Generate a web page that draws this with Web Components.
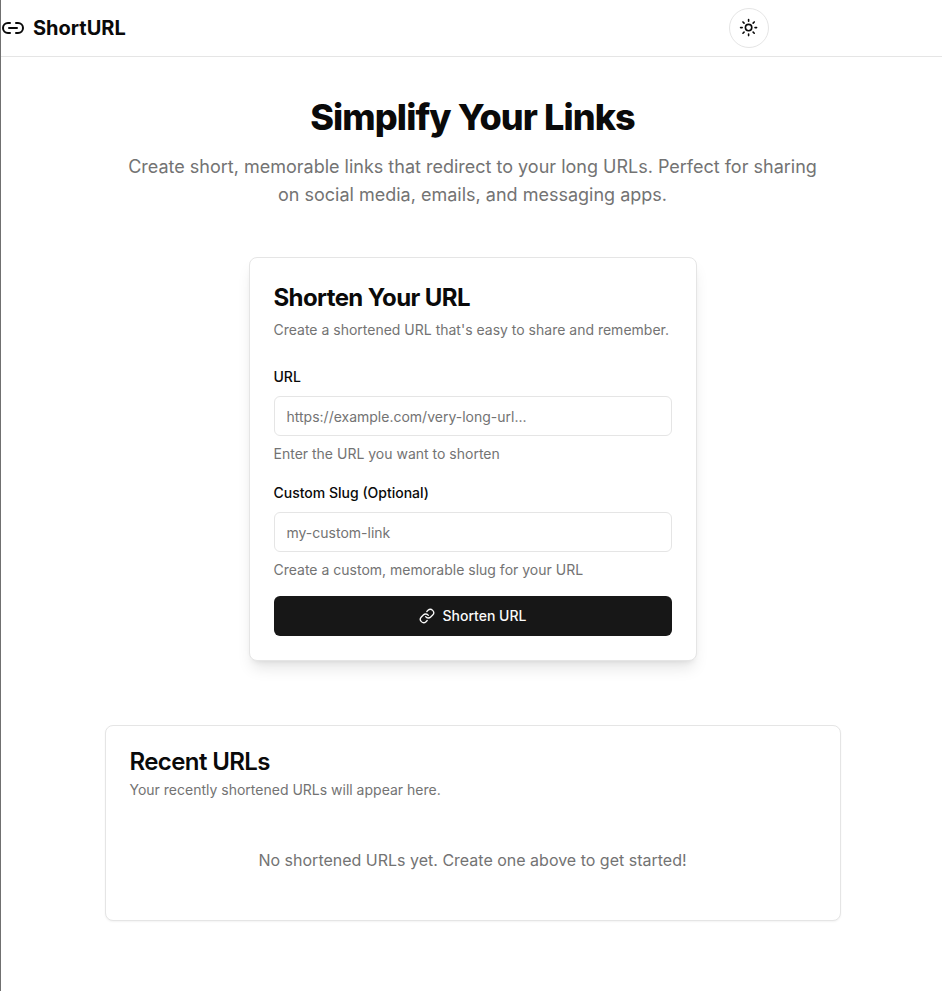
<!DOCTYPE html>
<html lang="en">
<head>
<meta charset="utf-8">
<title>ShortURL</title>
<style>
html{background:#fff}
body{margin:0;font-family:Inter,sans-serif;font-size:16px;line-height:24px;color:#0a0a0a;overflow:hidden;
--muted:#737373;--line:#e5e5e5;--primary:#171717}
</style>
</head>
<body>
<short-app></short-app>
<script>
const define = (name, html) => {
  const t = document.createElement('template');
  t.innerHTML = '<style>*{box-sizing:border-box}:host{box-sizing:border-box}</style>' + html;
  customElements.define(name, class extends HTMLElement {
    constructor() {
      super();
      this.attachShadow({mode: 'open'}).append(t.content.cloneNode(true));
      for (const el of this.shadowRoot.querySelectorAll('[data-placeholder]'))
        el.placeholder = this.getAttribute('placeholder') || '';
    }
  });
};

define('app-icon', `<style>
:host{display:block;flex:none;width:24px;height:24px}
svg{display:none;width:100%;height:100%;fill:none;stroke:currentColor;stroke-width:2;stroke-linecap:round;stroke-linejoin:round}
:host([name=link2]) .link2,:host([name=link]) .link,:host([name=sun]) .sun{display:block}
</style>
<svg class="link2" viewBox="0 0 24 24"><path d="M9 17H7A5 5 0 0 1 7 7h2M15 7h2a5 5 0 1 1 0 10h-2M8 12h8"/></svg>
<svg class="link" viewBox="0 0 24 24"><path d="M10 13a5 5 0 0 0 7.54.54l3-3a5 5 0 0 0-7.07-7.07l-1.72 1.71"/><path d="M14 11a5 5 0 0 0-7.54-.54l-3 3a5 5 0 0 0 7.07 7.07l1.71-1.71"/></svg>
<svg class="sun" viewBox="0 0 24 24"><circle cx="12" cy="12" r="4"/><path d="M12 2v2M12 20v2M4.93 4.93l1.41 1.41M17.66 17.66l1.41 1.41M2 12h2M20 12h2M6.34 17.66l-1.41 1.41M19.07 4.93l-1.41 1.41"/></svg>`);

define('site-header', `<style>
:host{display:block;border-bottom:1px solid var(--line)}
.bar{width:768px;height:56px;display:flex;align-items:center;justify-content:space-between}
.brand{display:flex;align-items:center;gap:8px;font-size:20px;line-height:28px;font-weight:700}
button{width:40px;height:40px;padding:0;border:1px solid var(--line);border-radius:50%;background:#fff;color:inherit;display:flex;align-items:center;justify-content:center}
button app-icon{width:19.2px;height:19.2px}
</style>
<div class="bar"><div class="brand"><app-icon name="link2"></app-icon><span>ShortURL</span></div>
<button aria-label="Toggle theme"><app-icon name="sun"></app-icon></button></div>`);

define('page-hero', `<style>
:host{display:block;text-align:center}
h1{margin:0 0 16px;font-size:36px;line-height:40px;font-weight:800;letter-spacing:-.9px}
p{margin:0 auto;max-width:700px;font-size:18px;line-height:28px;color:var(--muted)}
</style><h1><slot name="title"></slot></h1><p><slot></slot></p>`);

define('ui-card', `<style>
:host{display:block;border:1px solid var(--line);border-radius:8px;background:#fff;padding:24px;box-shadow:0 1px 2px rgba(0,0,0,.05)}
:host([raised]){box-shadow:0 10px 15px -3px rgba(0,0,0,.1),0 4px 6px -4px rgba(0,0,0,.1)}
h2{margin:0 0 6px;font-size:24px;line-height:24px;font-weight:600;letter-spacing:-.6px}
:host([raised]) h2{line-height:32px;font-weight:700}
p{margin:0 0 24px;font-size:14px;line-height:20px;color:var(--muted)}
</style><h2><slot name="title"></slot></h2><p><slot name="description"></slot></p><slot></slot>`);

define('form-field', `<style>
:host{display:grid;gap:8px;font-size:14px;line-height:20px}
label{line-height:24px;font-weight:500;padding-top:1px;height:24px}
input{width:100%;height:40px;border:1px solid var(--line);border-radius:6px;padding:8px 12px;background:#fff;font:inherit;color:inherit;outline:0}
input::placeholder{color:var(--muted);opacity:1}
.hint{color:var(--muted)}
</style><label for="field"><slot name="label"></slot></label><input id="field" data-placeholder><div class="hint"><slot></slot></div>`);

define('primary-button', `<style>
:host{display:block}
button{width:100%;height:40px;border:0;border-radius:6px;background:var(--primary);color:#fafafa;font:500 14px/20px Inter,sans-serif;display:flex;align-items:center;justify-content:center;gap:8px}
app-icon{width:16px;height:16px}
</style><button><app-icon name="link"></app-icon><slot></slot></button>`);

define('short-app', `<style>
:host{display:block;min-height:991px;border-left:1px solid #707070}
main{width:943px;padding:40px 0;display:grid;grid-template-columns:736px;justify-content:center}
.form-card{width:448px;margin:48px auto 64px}
form{display:grid;gap:16px}
.empty{padding:24px 0;text-align:center;color:var(--muted)}
</style>
<site-header></site-header>
<main>
<page-hero><span slot="title">Simplify Your Links</span>Create short, memorable links that redirect to your long URLs. Perfect for sharing on social media, emails, and messaging apps.</page-hero>
<ui-card raised class="form-card"><span slot="title">Shorten Your URL</span><span slot="description">Create a shortened URL that's easy to share and remember.</span>
<form>
<form-field placeholder="https://example.com/very-long-url..."><span slot="label">URL</span>Enter the URL you want to shorten</form-field>
<form-field placeholder="my-custom-link"><span slot="label">Custom Slug (Optional)</span>Create a custom, memorable slug for your URL</form-field>
<primary-button>Shorten URL</primary-button>
</form></ui-card>
<ui-card><span slot="title">Recent URLs</span><span slot="description">Your recently shortened URLs will appear here.</span>
<div class="empty">No shortened URLs yet. Create one above to get started!</div></ui-card>
</main>`);
</script>
</body>
</html>
